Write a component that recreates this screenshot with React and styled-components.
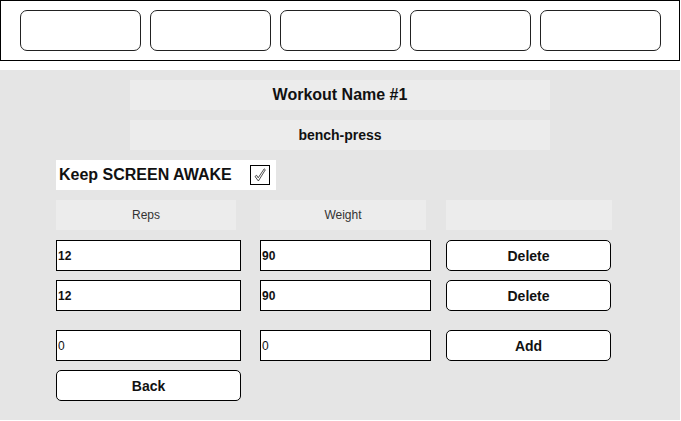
import React from 'react';
import styled, { createGlobalStyle } from 'styled-components';

const GlobalStyle = createGlobalStyle`
  body {
    margin: 0;
    background: #fff;
    font-family: "Liberation Sans", Arial, sans-serif;
  }
`;

const TopNav = styled.nav`
  box-sizing: border-box;
  width: 680px;
  height: 61px;
  border: 1px solid #000;
  padding: 9px 0 0 19px;
  display: flex;
  gap: 10px;
`;

const NavButton = styled.button`
  box-sizing: border-box;
  width: 121px;
  height: 41px;
  margin-right: -1px;
  background: #fff;
  border: 1px solid #222;
  border-radius: 7px;
`;

const Main = styled.main`
  box-sizing: border-box;
  width: 680px;
  height: 350px;
  margin-top: 9px;
  background: #e5e5e5;
  padding-top: 10px;
  display: flex;
  flex-direction: column;
`;

const Banner = styled.div`
  width: 420px;
  height: 30px;
  margin: 0 auto 10px;
  background: #ececec;
  display: flex;
  align-items: center;
  justify-content: center;
  font-weight: bold;
  font-size: ${p => p.$size}px;
  color: #111;
`;

const KeepRow = styled.label`
  box-sizing: border-box;
  width: 220px;
  height: 30px;
  margin: 0 0 10px 56px;
  padding: 0 6px 0 3px;
  background: #fff;
  display: flex;
  align-items: center;
  font-weight: bold;
  font-size: 16px;
  color: #111;
`;

const CheckBox = styled.span`
  box-sizing: border-box;
  margin-left: auto;
  width: 20px;
  height: 20px;
  border: 1px solid #000;
  display: flex;
  align-items: center;
  justify-content: center;
`;

const Grid = styled.div`
  margin-left: 56px;
  display: grid;
  grid-template-columns: 204px 186px 166px;
  row-gap: 10px;
`;

const HeadCell = styled.div`
  width: ${p => p.$w}px;
  height: 30px;
  background: #ececec;
  display: flex;
  align-items: center;
  justify-content: center;
  font-size: 12px;
  color: #333;
`;

const NumInput = styled.input`
  box-sizing: border-box;
  width: ${p => p.$w}px;
  height: 31px;
  margin: 0 0 -1px;
  padding: 0 1px;
  border: 1px solid #000;
  background: #fff;
  font-family: "Liberation Sans", Arial, sans-serif;
  font-size: 12px;
  font-weight: ${p => (p.$bold ? 'bold' : 'normal')};
  color: #111;
  outline: none;
`;

const ActionButton = styled.button`
  box-sizing: border-box;
  width: ${p => p.$w}px;
  height: 31px;
  margin: 0 0 -1px;
  background: #fff;
  border: 1px solid #000;
  border-radius: 5px;
  font-family: "Liberation Sans", Arial, sans-serif;
  font-weight: bold;
  font-size: 14px;
  color: #111;
`;

const Spacer = styled.div`
  grid-column: 1 / -1;
  height: 0;
`;

const Check = () => (
  <svg width="16" height="16" viewBox="0 0 16 16">
    <path
      d="M3 9.5 L4.6 8.3 L6.2 10.8 L12.2 1.8 L13.3 2.8 L6.4 14 Z"
      fill="none"
      stroke="#222"
      strokeWidth="0.8"
      strokeLinejoin="round"
    />
  </svg>
);

const sets = [
  { reps: 12, weight: 90 },
  { reps: 12, weight: 90 },
];

export default function App() {
  return (
    <>
      <GlobalStyle />
      <TopNav>
        {[0, 1, 2, 3, 4].map(i => (
          <NavButton key={i} />
        ))}
      </TopNav>
      <Main>
        <Banner $size={16}>Workout Name #1</Banner>
        <Banner $size={14}>bench-press</Banner>
        <KeepRow>
          Keep SCREEN AWAKE
          <CheckBox>
            <Check />
          </CheckBox>
        </KeepRow>
        <Grid>
          <HeadCell $w={180}>Reps</HeadCell>
          <HeadCell $w={166}>Weight</HeadCell>
          <HeadCell $w={166} />
          {sets.map((s, i) => (
            <React.Fragment key={i}>
              <NumInput $w={185} $bold defaultValue={s.reps} />
              <NumInput $w={171} $bold defaultValue={s.weight} />
              <ActionButton $w={165}>Delete</ActionButton>
            </React.Fragment>
          ))}
          <Spacer />
          <NumInput $w={185} defaultValue={0} />
          <NumInput $w={171} defaultValue={0} />
          <ActionButton $w={165}>Add</ActionButton>
          <ActionButton $w={185}>Back</ActionButton>
        </Grid>
      </Main>
    </>
  );
}
